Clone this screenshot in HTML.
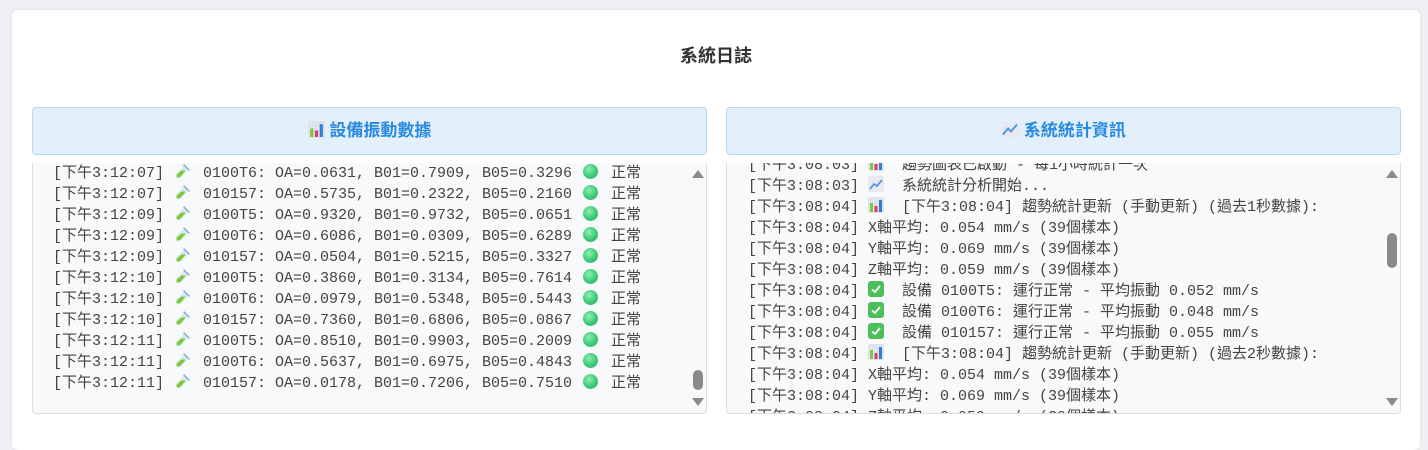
<!DOCTYPE html>
<html><head><meta charset="utf-8"><style>
*{box-sizing:border-box;margin:0;padding:0}
body{width:1428px;height:437px;background:#eef0f3;font-family:"Liberation Sans","Noto Sans CJK TC",sans-serif;overflow:hidden;position:relative}
.card{position:absolute;left:12px;top:10px;width:1408px;height:440px;background:#fff;border-radius:6px;box-shadow:0 0 3px rgba(0,0,0,.08)}
h2{position:absolute;left:0;right:0;top:34px;text-align:center;font-size:18px;font-weight:bold;color:#333;line-height:24px}
.hdr{position:absolute;top:107px;height:48px;background:#e3f0fc;border:1px solid #b9daf5;border-radius:4px;color:#2a8ae0;font-weight:bold;font-size:17px;line-height:46px;text-align:center}
.box{position:absolute;top:163px;height:251px;background:#f8f9fb;border:1px solid #ddd;border-top:none;border-radius:0 0 4px 4px;overflow:hidden}
.ln{position:absolute;height:21px;line-height:21px;font-family:"Liberation Mono","Noto Sans CJK TC",monospace;font-size:15px;color:#444;white-space:pre}
.a{position:absolute;top:0}
.sb{position:absolute;right:0;top:0;width:17px;height:100%;background:#f9f9fa}
.up,.dn{position:absolute;left:3px;width:0;height:0;border-left:6px solid transparent;border-right:6px solid transparent}
.up{top:7px;border-bottom:8px solid #8a8a8a}
.dn{bottom:7px;border-top:8px solid #8a8a8a}
.th{position:absolute;left:4px;width:10px;border-radius:5px;background:#8a8a8a}
.dot{display:inline-block;width:15px;height:15px;border-radius:50%;background:radial-gradient(circle at 40% 35%,#8ef0b0,#3cc878 55%,#2fa866);vertical-align:-2px}
svg{vertical-align:-2px}
</style></head><body>
<div class="card"><h2>系統日誌</h2></div>
<div class="hdr" style="left:32px;width:675px"><svg width="17" height="17" viewBox="0 0 16 16"><rect x="0" y="0" width="16" height="16" rx="2" fill="#dfe3ea"/><rect x="2" y="7" width="3" height="8" fill="#7ac943"/><rect x="6.5" y="9" width="3" height="6" fill="#e8336d"/><rect x="11" y="3" width="3" height="12" fill="#2f7fd8"/></svg> 設備振動數據</div>
<div class="hdr" style="left:726px;width:675px"><svg width="18" height="17" viewBox="0 0 18 16"><rect x="0" y="0" width="18" height="16" rx="2" fill="#e6eaf0"/><path d="M2 13 L7 7 L10 10 L16 3" stroke="#4a8fe0" stroke-width="1.8" fill="none"/></svg> 系統統計資訊</div>

<div class="box" style="left:32px;width:675px" id="L"><div class="sb"><div class="up"></div><div class="th" style="top:207px;height:20px"></div><div class="dn"></div></div></div>
<div class="box" style="left:726px;width:675px" id="R"><div class="sb"><div class="up"></div><div class="th" style="top:70px;height:35px"></div><div class="dn"></div></div></div>

<script>
var tube='<svg width="17" height="17" viewBox="0 0 16 16"><path d="M10 2 L14 6 L6 14 Q3 15 2 14 Q1 13 2 10 Z" fill="#dbe8f0"/><path d="M7 7 L11 7 L6 13 Q3.5 14 2.8 13.2 Q2 12 3 10.5 Z" fill="#7cc93a"/><path d="M9 1.5 L14.5 7" stroke="#8fb6d6" stroke-width="1.6"/></svg>';
var L=[["3:12:07","0100T6: OA=0.0631, B01=0.7909, B05=0.3296"],["3:12:07","010157: OA=0.5735, B01=0.2322, B05=0.2160"],["3:12:09","0100T5: OA=0.9320, B01=0.9732, B05=0.0651"],["3:12:09","0100T6: OA=0.6086, B01=0.0309, B05=0.6289"],["3:12:09","010157: OA=0.0504, B01=0.5215, B05=0.3327"],["3:12:10","0100T5: OA=0.3860, B01=0.3134, B05=0.7614"],["3:12:10","0100T6: OA=0.0979, B01=0.5348, B05=0.5443"],["3:12:10","010157: OA=0.7360, B01=0.6806, B05=0.0867"],["3:12:11","0100T5: OA=0.8510, B01=0.9903, B05=0.2009"],["3:12:11","0100T6: OA=0.5637, B01=0.6975, B05=0.4843"],["3:12:11","010157: OA=0.0178, B01=0.7206, B05=0.7510"]];
var h='';L.forEach(function(r,i){h+='<div class="ln" style="top:'+(i*21)+'px;left:0;width:650px"><span class="a" style="left:20px">[下午'+r[0]+']</span><span class="a" style="left:141px">'+tube+'</span><span class="a" style="left:170px">'+r[1]+'</span><span class="a" style="left:550px"><span class="dot"></span></span><span class="a" style="left:578px">正常</span></div>';});
document.getElementById('L').insertAdjacentHTML('afterbegin',h);
var bar='<svg width="16" height="16" viewBox="0 0 16 16"><rect width="16" height="16" rx="2" fill="#dfe3ea"/><rect x="2" y="6" width="3" height="9" fill="#7ac943"/><rect x="6.5" y="9" width="3" height="6" fill="#e8336d"/><rect x="11" y="3" width="3" height="12" fill="#2f7fd8"/></svg>';
var chk='<svg width="16" height="16" viewBox="0 0 16 16"><rect width="16" height="16" rx="3" fill="#4cbf5a"/><path d="M4 8.5 L7 11 L12 5" stroke="#fff" stroke-width="1.8" fill="none"/></svg>';
var ln='<svg width="16" height="16" viewBox="0 0 16 16"><rect width="16" height="16" rx="2" fill="#e6eaf0"/><path d="M2 13 L6 8 L9 10 L14 4" stroke="#4a8fe0" stroke-width="1.6" fill="none"/></svg>';
var R=[["3:08:03",bar,"  趨勢圖表已啟動 - 每1小時統計一次"],["3:08:03",ln,"  系統統計分析開始..."],["3:08:04",bar,"  [下午3:08:04] 趨勢統計更新 (手動更新) (過去1秒數據):"],["3:08:04","","X軸平均: 0.054 mm/s (39個樣本)"],["3:08:04","","Y軸平均: 0.069 mm/s (39個樣本)"],["3:08:04","","Z軸平均: 0.059 mm/s (39個樣本)"],["3:08:04",chk,"  設備 0100T5: 運行正常 - 平均振動 0.052 mm/s"],["3:08:04",chk,"  設備 0100T6: 運行正常 - 平均振動 0.048 mm/s"],["3:08:04",chk,"  設備 010157: 運行正常 - 平均振動 0.055 mm/s"],["3:08:04",bar,"  [下午3:08:04] 趨勢統計更新 (手動更新) (過去2秒數據):"],["3:08:04","","X軸平均: 0.054 mm/s (39個樣本)"],["3:08:04","","Y軸平均: 0.069 mm/s (39個樣本)"],["3:08:04","","Z軸平均: 0.059 mm/s (39個樣本)"]];
h='';R.forEach(function(r,i){h+='<div class="ln" style="top:'+(i*21-8)+'px;left:21px">[下午'+r[0]+'] '+r[1]+r[2]+'</div>';});
document.getElementById('R').insertAdjacentHTML('afterbegin',h);
</script>
</body></html>
